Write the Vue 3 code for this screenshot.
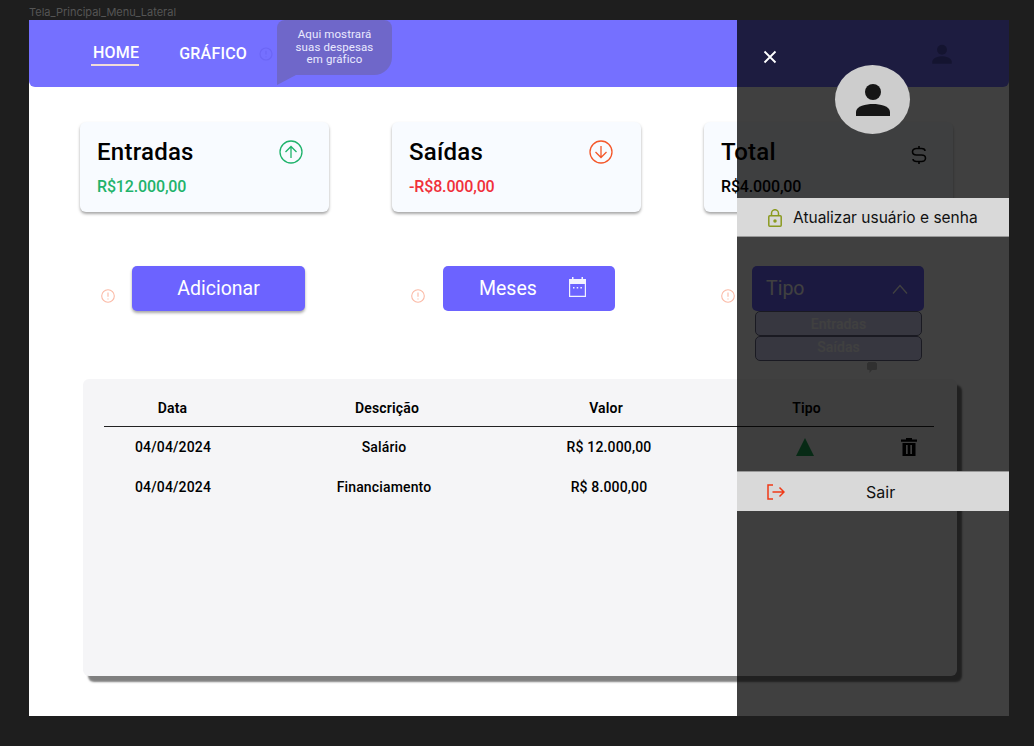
<script setup>
const cards = [
  { title: 'Entradas', value: 'R$12.000,00', cls: 'green', icon: 'up' },
  { title: 'Saídas', value: '-R$8.000,00', cls: 'red', icon: 'down' },
  { title: 'Total', value: 'R$4.000,00', cls: 'black', icon: 'dollar' }
]
const rows = [
  { date: '04/04/2024', desc: 'Salário', val: 'R$ 12.000,00' },
  { date: '04/04/2024', desc: 'Financiamento', val: 'R$ 8.000,00' }
]
</script>

<template>
  <div class="page">
    <div class="frame-label">Tela_Principal_Menu_Lateral</div>
    <div class="board">
      <header class="topbar">
        <nav class="nav">
          <a class="nav-item active">HOME</a>
          <a class="nav-item">GRÁFICO</a>
          <svg class="info" viewBox="0 0 14 14" width="14" height="14" fill="none" stroke="#6c66f5" stroke-width="1.2">
            <circle cx="7" cy="7" r="6" />
            <path d="M7 3.800v3.600M7 9.400v.8" />
          </svg>
        </nav>
        <div class="bubble">Aqui mostrará<br />suas despesas<br />em gráfico</div>
        <svg class="head-user" viewBox="0 0 24 24" width="26" height="26" fill="#5250c0">
          <circle cx="12" cy="8" r="4.600" />
          <path d="M3 21v-2c0-3.400 5.600-5 9-5s9 1.600 9 5v2z" />
        </svg>
      </header>

      <main class="main">
        <section class="cards">
          <article v-for="c in cards" :key="c.title" class="card">
            <div class="card-text">
              <h2>{{ c.title }}</h2>
              <p :class="c.cls">{{ c.value }}</p>
            </div>
            <svg v-if="c.icon === 'up'" class="card-icon" viewBox="0 0 24 24" width="24" height="24" fill="none" stroke="#1fb36b" stroke-width="1.3">
              <circle cx="12" cy="12" r="11" />
              <path d="M12 18V6.500M6.500 12 12 6.500l5.500 5.500" />
            </svg>
            <svg v-else-if="c.icon === 'down'" class="card-icon down" viewBox="0 0 24 24" width="24" height="24" fill="none" stroke="#f4572a" stroke-width="1.3">
              <circle cx="12" cy="12" r="11" />
              <path d="M12 6v11.500M6.500 12l5.500 5.500 5.500-5.500" />
            </svg>
            <svg v-else class="card-icon dollar" viewBox="0 0 16 20" width="16" height="20" fill="none" stroke="#0b0b0b" stroke-width="1.6">
              <path d="M14 6C14 4.500 12.500 3.500 10.500 3.500H5.500C3.200 3.500 1.500 5 1.500 6.800S3.200 10 5.500 10H10.500C12.800 10 14.500 11.400 14.500 13.200S12.800 16.500 10.500 16.500H5.500C3.500 16.500 2 15.500 2 14M8 1v2.500M8 16.500V19" />
            </svg>
          </article>
        </section>

        <section class="actions">
          <div class="action">
            <svg class="alert" viewBox="0 0 14 14" width="14" height="14" fill="none" stroke="#fbb9a5" stroke-width="1.1">
              <circle cx="7" cy="7" r="6.300" />
              <path d="M7 3.500v4.200M7 9.400v1" />
            </svg>
            <button class="btn shadowed">Adicionar</button>
          </div>
          <div class="action">
            <svg class="alert" viewBox="0 0 14 14" width="14" height="14" fill="none" stroke="#fbb9a5" stroke-width="1.1">
              <circle cx="7" cy="7" r="6.300" />
              <path d="M7 3.500v4.200M7 9.400v1" />
            </svg>
            <button class="btn months">
              <span>Meses</span>
              <svg viewBox="0 0 17 20" width="17" height="20" fill="#f2f2ff">
                <path d="M3 0h1.500v2h8V0H14v2h3v18H0V2h3zM1.200 7v11.800h14.600V7z" />
                <rect x="4" y="10" width="1.500" height="1.500" />
                <rect x="7.700" y="10" width="1.500" height="1.500" />
                <rect x="11.400" y="10" width="1.500" height="1.500" />
              </svg>
            </button>
          </div>
          <div class="action">
            <svg class="alert" viewBox="0 0 14 14" width="14" height="14" fill="none" stroke="#fbb9a5" stroke-width="1.1">
              <circle cx="7" cy="7" r="6.300" />
              <path d="M7 3.500v4.200M7 9.400v1" />
            </svg>
            <div class="select-wrap">
              <button class="btn tipo">
                <span>Tipo</span>
                <svg viewBox="0 0 16 10" width="16" height="10" fill="none" stroke="#fff" stroke-width="1.300">
                  <path d="M1 9.500 8 1.500l7 8" />
                </svg>
              </button>
              <div class="options">
                <div class="option">Entradas</div>
                <div class="option">Saídas</div>
              </div>
              <svg class="mini-bubble" viewBox="0 0 10 11" width="10" height="11" fill="#c0c0c0">
                <path d="M0 1.500 1.500 0h7L10 1.500v6L8.500 8H5l-2.500 3V8h-1L0 7.500z" />
              </svg>
            </div>
          </div>
        </section>

        <section class="panel">
          <div class="t-head">
            <span>Data</span><span>Descrição</span><span>Valor</span><span>Tipo</span>
          </div>
          <div v-for="(r, i) in rows" :key="i" class="t-row">
            <span>{{ r.date }}</span><span>{{ r.desc }}</span><span>{{ r.val }}</span>
            <span class="row-icons">
              <template v-if="i === 0">
                <svg class="tri" viewBox="0 0 18 18" width="18" height="18" fill="#1fa653"><path d="M9 0l9 18H0z" /></svg>
                <svg class="trash" viewBox="0 0 16 18" width="16" height="18" fill="#000">
                  <path d="M5 0h6v1.500h5v2.300H0V1.500h5zM1.500 5h13v13h-13zM5 7v9h1.700V7zm4.300 0v9H11V7z" fill-rule="evenodd" />
                </svg>
              </template>
            </span>
          </div>
        </section>
      </main>

      <aside class="drawer">
        <svg class="close" viewBox="0 0 14 14" width="14" height="14" fill="none" stroke="#fff" stroke-width="1.800">
          <path d="M1.500 1.500l11 11M12.500 1.500l-11 11" />
        </svg>
        <div class="avatar">
          <svg viewBox="0 0 34 34" width="34" height="34" fill="#161616">
            <circle cx="17" cy="9" r="8" />
            <path d="M0 33v-4c0-6 10-8 17-8s17 2 17 8v4z" />
          </svg>
        </div>
        <div class="menu-item first">
          <svg viewBox="0 0 14 18" width="14" height="18" fill="none" stroke="#8a9a1f" stroke-width="1.500">
            <rect x=".8" y="6.800" width="12.400" height="10.400" rx="1" />
            <path d="M3.500 6.800V4.200a3.500 3.500 0 0 1 7 0v2.600" />
            <circle cx="7" cy="12" r="1" fill="#8a9a1f" />
          </svg>
          <span class="upd-text">Atualizar usuário e senha</span>
        </div>
        <div class="menu-item exit">
          <svg viewBox="0 0 18 16" width="18" height="16" fill="none" stroke="#f03a17" stroke-width="1.500">
            <path d="M6 1H1v14h5M5.500 8H17M12.500 3.500 17 8l-4.500 4.500" />
          </svg>
          <span class="exit-text">Sair</span>
        </div>
      </aside>
    </div>
  </div>
</template>

<style>
html, body { margin: 0; background: #1e1e1e; }
</style>

<style scoped>
.page {
  width: 1034px;
  height: 746px;
  background: #1e1e1e;
  overflow: hidden;
  font-family: Roboto, "Liberation Sans", sans-serif;
}
.frame-label {
  height: 20px;
  box-sizing: border-box;
  padding: 6px 0 0 29px;
  font: 11px/13px Inter, sans-serif;
  color: #555;
}
.board {
  position: relative;
  margin-left: 29px;
  width: 980px;
  height: 696px;
  background: #fff;
  overflow: hidden;
}
.topbar {
  position: relative;
  display: flex;
  align-items: center;
  height: 67px;
  background: #7570ff;
  border-radius: 0 0 6px 6px;
  padding-left: 62px;
  padding-right: 54px;
  box-sizing: border-box;
}
.nav { display: flex; align-items: center; }
.nav-item {
  color: #fff;
  font-size: 16px;
  font-weight: 500;
  line-height: 20px;
  letter-spacing: .2px;
}
.nav-item.active {
  padding: 0 0 1px 2px;
  border-bottom: 2px solid #f0dcd8;
  margin-right: 40px;
  margin-top: 2px;
}
.info { margin-left: 12px; }
.bubble {
  position: absolute;
  left: 248px;
  top: 0;
  width: 115px;
  height: 55px;
  box-sizing: border-box;
  padding-top: 8px;
  background: #6f67c9;
  border-radius: 8px 8px 18px 0;
  color: #eaeaff;
  font-size: 11.500px;
  line-height: 12.500px;
  letter-spacing: .1px;
  text-align: center;
}
.bubble::after {
  content: "";
  position: absolute;
  left: 0;
  top: 55px;
  width: 19px;
  height: 10px;
  background: #6f67c9;
  clip-path: polygon(0 0, 100% 0, 0 100%);
}
.head-user { margin-left: auto; }
.main { padding: 35px 0 0 51px; }
.cards {
  display: grid;
  grid-template-columns: repeat(3, 249px);
  column-gap: 63px;
}
.card {
  display: flex;
  justify-content: space-between;
  height: 90px;
  box-sizing: border-box;
  padding: 16px 26px 0 17px;
  background: #f8fbff;
  border-radius: 6px;
  box-shadow: 0 2px 3px rgba(0, 0, 0, .35);
}
.card h2 {
  margin: 0;
  font-size: 24px;
  font-weight: 500;
  line-height: 28px;
  letter-spacing: .25px;
  color: #000;
}
.card p {
  margin: 11px 0 0;
  font-size: 16px;
  font-weight: 500;
  line-height: 20px;
  letter-spacing: -.15px;
}
.green { color: #1fb36b; }
.red { color: #f0303a; }
.black { color: #000; }
.card-icon { margin-top: 2px; }
.card-icon.down { margin-right: 2px; }
.card-icon.dollar { margin-top: 7px; margin-right: 0; }
.actions {
  display: grid;
  grid-template-columns: 310px 310px 1fr;
  margin: 54px 0 0 21px;
}
.action {
  display: flex;
  align-items: flex-end;
  gap: 17px;
}
.alert { margin-bottom: 8px; flex: none; }
.select-wrap { position: relative; }
.btn {
  display: block;
  width: 172px;
  height: 45px;
  border: 0;
  border-radius: 5px;
  background: #6c63ff;
  color: #fff;
  font-family: Roboto, sans-serif;
  font-size: 19.500px;
  font-weight: 400;
  padding: 0 0 1px;
}
.shadowed { box-shadow: 0 2px 3px rgba(0, 0, 0, .35); width: 173px; }
.months {
  display: flex;
  align-items: center;
  justify-content: space-between;
  margin-left: 1px;
  padding: 0 29px 1px 36px;
  box-sizing: border-box;
}
.months svg { margin-bottom: 3px; }
.tipo {
  display: flex;
  align-items: center;
  justify-content: space-between;
  padding: 0 16px 0 14px;
  box-sizing: border-box;
}
.options {
  position: absolute;
  left: 3px;
  top: 45px;
  width: 167px;
}
.option {
  height: 25px;
  box-sizing: border-box;
  border: 1px solid #6a6a88;
  border-radius: 5px;
  background: #dcdcff;
  color: #fff;
  font-size: 14px;
  font-weight: 500;
  line-height: 25px;
  text-align: center;
}
.option + .option { line-height: 21px; }
.mini-bubble {
  position: absolute;
  left: 115px;
  top: 96px;
}
.panel {
  margin: 68px 0 0 3px;
  width: 874px;
  height: 297px;
  box-sizing: border-box;
  padding: 20px 21px 0;
  background: #f5f5f7;
  border-radius: 6px;
  box-shadow: 5px 6px 2px rgba(0, 0, 0, .5);
  color: #000;
}
.t-head {
  display: grid;
  grid-template-columns: 137px 292px 146px 255px;
  width: 830px;
  height: 28px;
  box-sizing: border-box;
  border-bottom: 1px solid #222;
  text-align: center;
  font-size: 14px;
  font-weight: 600;
  line-height: 18px;
  letter-spacing: .15px;
}
.t-row {
  display: grid;
  grid-template-columns: 138px 284px 166px 242px;
  width: 830px;
  height: 40px;
  align-items: center;
  text-align: center;
  font-size: 14px;
  font-weight: 500;
  letter-spacing: .15px;
}
.row-icons {
  display: flex;
  align-items: center;
  padding-left: 104px;
}
.trash { margin-left: 87px; }
.drawer {
  position: absolute;
  left: 708px;
  top: 0;
  right: 0;
  bottom: 0;
  background: rgba(0, 0, 0, .75);
  display: flex;
  flex-direction: column;
}
.close { margin: 30px 0 0 26px; flex: none; }
.avatar {
  display: flex;
  align-items: center;
  justify-content: center;
  width: 75px;
  height: 69px;
  margin: 1px 0 0 98px;
  border-radius: 50%;
  background: #cdcdcd;
}
.menu-item {
  display: flex;
  align-items: center;
  background: #d9d9d9;
  color: #111;
  font-family: Inter, sans-serif;
  font-size: 16px;
  box-sizing: border-box;
}
.menu-item.first {
  height: 39px;
  margin-top: 64px;
  padding: 1px 0 0 31px;
  gap: 11px;
  border-bottom: 1px solid #999;
}
.upd-text { font-size: 15.500px; }
.menu-item.exit {
  position: relative;
  height: 40px;
  margin-top: 234px;
  padding-left: 30px;
  border-top: 1px solid #999;
}
.exit-text { margin-left: 81px; }
</style>
